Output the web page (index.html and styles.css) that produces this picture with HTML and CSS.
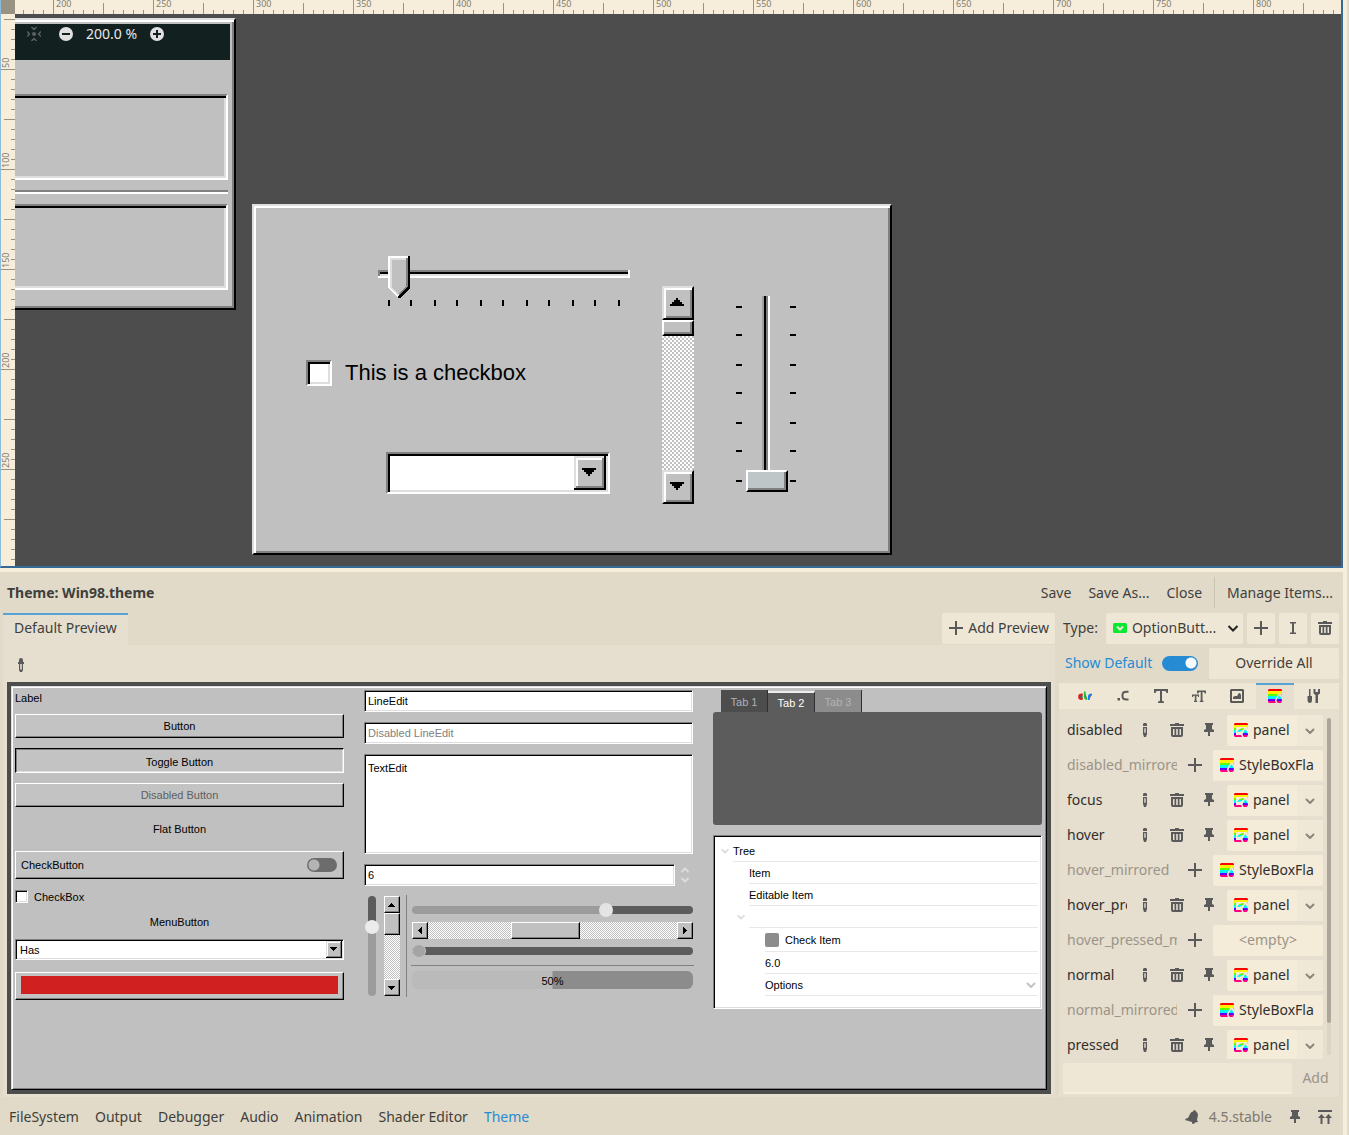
FILE: index.html
```html
<!DOCTYPE html>
<html lang="en">
<head>
<meta charset="utf-8">
<title>Theme Editor</title>
<link rel="stylesheet" href="styles.css">
</head>
<body>
<svg class="defs" aria-hidden="true">
  <defs>
    <linearGradient id="rainbow" x1="0" y1="0" x2="0" y2="14" gradientUnits="userSpaceOnUse">
      <stop offset=".17" stop-color="#ff0000"/><stop offset=".17" stop-color="#fff000"/>
      <stop offset=".34" stop-color="#fff000"/><stop offset=".34" stop-color="#5cff00"/>
      <stop offset=".48" stop-color="#5cff00"/><stop offset=".48" stop-color="#00ffe0"/>
      <stop offset=".68" stop-color="#00f0ff"/><stop offset=".68" stop-color="#5c00ff"/>
      <stop offset=".84" stop-color="#5c00ff"/><stop offset=".84" stop-color="#ff0080"/>
    </linearGradient>
  </defs>
  <symbol id="plus" viewBox="0 0 14 14"><path d="M6 0h2v6h6v2H8v6H6V8H0V6h6z"/></symbol>
  <symbol id="pencil" viewBox="0 0 14 14"><path d="M6 0h2l1 1v2H5V1zM5 4h4v7l-1 3H6l-1-3zm1.300 1.300v4.400h1.400V5.300z" fill-rule="evenodd"/></symbol>
  <symbol id="trash" viewBox="0 0 14 14"><path d="M4 1h1V0h4v1h5v2H0V1zM1 4h12v8q0 2-2 2H3q-2 0-2-2zm2 2v6h1.500V6zm3.200 0v6h1.600V6zm3.300 0v6H11V6z" fill-rule="evenodd"/></symbol>
  <symbol id="pin" viewBox="0 0 14 14"><path d="M3 0h8v2h-1v4l2 1v2H8v4H6V9H2V7l2-1V2H3z"/></symbol>
  <symbol id="chev" viewBox="0 0 14 14"><path d="M3.500 5.500 7 9l3.500-3.500" fill="none" stroke="currentColor" stroke-width="2" stroke-linecap="round" stroke-linejoin="round"/></symbol>
  <symbol id="boxflat" viewBox="0 0 14 14"><path fill="url(#rainbow)" fill-rule="evenodd" d="M1 0h12l1 1v6Q13 5 11.500 3.500 9 7 7 11q0 2 1 3H1l-1-1V1zM11.500 6Q14 9.500 14 11.300a2.500 2.700 0 0 1-5.400 0Q9 9.500 11.500 6z"/></symbol>
  <symbol id="boxtex" viewBox="0 0 14 14"><path fill="url(#rainbow)" fill-rule="evenodd" d="M1 0h12l1 1v5l-1.500-2H2v8h5l1 2H1l-1-1V1zM3 9q2-4 7-4Q9 9 3 9zM11.300 6Q14 9.500 14 11.300a2.500 2.700 0 0 1-5.400 0Q9 9.500 11.300 6z"/></symbol>
</svg>

<div class="app">
<main class="main">
  <section class="canvas" aria-label="Canvas">
    <div class="corner"></div>
    <div class="ruler-x"><span>200</span><span>250</span><span>300</span><span>350</span><span>400</span><span>450</span><span>500</span><span>550</span><span>600</span><span>650</span><span>700</span><span>750</span><span>800</span></div>
    <div class="ruler-y"><span>50</span><span>100</span><span>150</span><span>200</span><span>250</span></div>
    <div class="stage">
      <div class="win win-left">
        <div class="caption"></div>
        <div class="well"></div>
        <div class="groove"></div>
        <div class="well"></div>
      </div>
      <div class="zoombar">
        <svg class="ic" viewBox="0 0 14 14"><g fill="none" stroke="#5b6161" stroke-width="1.500"><path d="M4.500 0 7 2.500 9.500 0M4.500 14 7 11.500 9.500 14M0 4.500 2.500 7 0 9.500M14 4.500 11.500 7 14 9.500"/></g><circle cx="7" cy="7" r="2" fill="#5b6161"/></svg>
        <button aria-label="Zoom out"><svg class="ic" viewBox="0 0 14 14"><circle cx="7" cy="7" r="7" fill="#e0e0e0"/><path d="M3 6h8v2H3z" fill="#132020"/></svg></button>
        <span>200.0 %</span>
        <button aria-label="Zoom in"><svg class="ic" viewBox="0 0 14 14"><circle cx="7" cy="7" r="7" fill="#e0e0e0"/><path d="M6 3h2v3h3v2H8v3H6V8H3V6h3z" fill="#132020"/></svg></button>
      </div>
      <div class="win win-right">
        <div class="hslide">
          <input type="range" class="range98" value="4" min="0" max="100" aria-label="Horizontal slider">
          <svg class="ticks-h" viewBox="0 0 232 6"><path d="M0 0h2v6H0zM22 0h2v6h-2zM46 0h2v6h-2zM68 0h2v6h-2zM92 0h2v6h-2zM114 0h2v6h-2zM138 0h2v6h-2zM160 0h2v6h-2zM184 0h2v6h-2zM206 0h2v6h-2zM230 0h2v6h-2z"/></svg>
        </div>
        <label class="check98"><input type="checkbox"><span>This is a checkbox</span></label>
        <select class="select98" aria-label="Option"><option></option></select>
        <div class="scroll98">
          <button aria-label="Scroll up"><svg viewBox="0 0 7 4"><path d="M3 0h1v1h1v1h1v1h1v1H0V3h1V2h1V1h1z"/></svg></button>
          <div class="thumb"></div>
          <button class="end" aria-label="Scroll down"><svg viewBox="0 0 7 4"><path d="M0 0h7v1H6v1H5v1H4v1H3V3H2V2H1V1H0z"/></svg></button>
        </div>
        <div class="vslide">
          <svg viewBox="0 0 6 176"><path d="M0 0h6v2H0zM0 28h6v2H0zM0 58h6v2H0zM0 86h6v2H0zM0 116h6v2H0zM0 144h6v2H0zM0 174h6v2H0z"/></svg>
          <input type="range" class="vrange98" value="0" aria-label="Vertical slider">
          <svg viewBox="0 0 6 176"><path d="M0 0h6v2H0zM0 28h6v2H0zM0 58h6v2H0zM0 86h6v2H0zM0 116h6v2H0zM0 144h6v2H0zM0 174h6v2H0z"/></svg>
        </div>
      </div>
    </div>
  </section>

  <section class="dock">
    <header class="titlebar">
      <h1>Theme: Win98.theme</h1>
      <button>Save</button><button>Save As...</button><button>Close</button>
      <i class="vsep"></i>
      <button>Manage Items...</button>
    </header>
    <div class="columns">
      <div class="left">
        <div class="tabrow"><button class="tab">Default Preview</button><button class="btn add"><svg class="ic"><use href="#plus"/></svg>Add Preview</button></div>
        <div class="pane">
          <button class="pick" aria-label="Pick control"><svg class="ic" viewBox="0 0 14 14"><path d="M7 0q2 0 2 2v2h1v2H9v6l-1 2H6l-1-2V6H4V4h1V2q0-2 2-2zM6.200 6v5.500h1.600V6z" fill-rule="evenodd"/></svg></button>
          <div class="frame"><div class="preview">
            <div class="col">
              <div class="plain">Label</div>
              <button class="b98">Button</button>
              <button class="b98 down">Toggle Button</button>
              <button class="b98" disabled>Disabled Button</button>
              <button class="flat98">Flat Button</button>
              <label class="b98 tall switchrow"><span>CheckButton</span><input type="checkbox" class="switch"></label>
              <label class="smallcheck"><input type="checkbox">CheckBox</label>
              <button class="menu98">MenuButton</button>
              <select class="smallselect" aria-label="Options"><option>Has</option></select>
              <button class="b98 tall color" aria-label="Colour"><span></span></button>
            </div>
            <div class="col">
              <input class="edit" value="LineEdit" aria-label="LineEdit">
              <input class="edit" value="Disabled LineEdit" disabled aria-label="Disabled LineEdit">
              <textarea class="edit area" aria-label="TextEdit">TextEdit</textarea>
              <div class="spin"><input class="edit" value="6" aria-label="Number"><svg viewBox="0 0 10 16"><path d="m1.500 5 3.500-3.500L8.500 5m-7 6L5 14.500 8.500 11" fill="none" stroke="#dcdcdc" stroke-width="2"/></svg></div>
              <div class="sliders">
                <input type="range" class="vrange" value="72" aria-label="Vertical value">
                <div class="sb sb-v"><button aria-label="Up"><svg viewBox="0 0 7 4"><path d="M3 0h1v1h1v1h1v1h1v1H0V3h1V2h1V1h1z"/></svg></button><div class="thumb"></div><button class="end" aria-label="Down"><svg viewBox="0 0 7 4"><path d="M0 0h7v1H6v1H5v1H4v1H3V3H2V2H1V1H0z"/></svg></button></div>
                <i class="line-v"></i>
                <div class="stack">
                  <input type="range" class="range" value="70" aria-label="Horizontal value">
                  <div class="sb sb-h"><button aria-label="Left"><svg viewBox="0 0 4 7"><path d="M3 0h1v7H3V6H2V5H1V4H0V3h1V2h1V1h1z"/></svg></button><div class="thumb"></div><button class="end" aria-label="Right"><svg viewBox="0 0 4 7"><path d="M0 0h1v1h1v1h1v1h1v1H3v1H2v1H1v1H0z"/></svg></button></div>
                  <input type="range" class="range idle" value="0" disabled aria-label="Disabled value">
                  <i class="line-h"></i>
                  <div class="bar"><span>50%</span></div>
                </div>
              </div>
            </div>
            <div class="col">
              <div class="tabs98">
                <div class="heads"><button>Tab 1</button><button class="on">Tab 2</button><button class="off" disabled>Tab 3</button></div>
                <div class="body"></div>
              </div>
              <ul class="tree">
                <li><svg class="ic"><use href="#chev"/></svg><span>Tree</span></li>
                <li class="l1"><span>Item</span></li>
                <li class="l1"><span>Editable Item</span></li>
                <li class="l1 open"><svg class="ic"><use href="#chev"/></svg><span></span></li>
                <li class="l2 chk"><span><i></i>Check Item</span></li>
                <li class="l2"><span>6.0</span></li>
                <li class="l2"><span>Options<svg class="ic"><use href="#chev"/></svg></span></li>
              </ul>
            </div>
          </div></div>
        </div>
      </div>

      <div class="right">
        <div class="typerow">
          <label for="type">Type:</label>
          <div class="btn typebox"><svg class="ic" viewBox="0 0 14 14"><rect y="2" width="14" height="10" rx="1.500" fill="#0be832"/><path d="m4 5.500 3 3 3-3" fill="none" stroke="#efe7d6" stroke-width="2"/></svg><select id="type"><option>OptionButt...</option></select><svg class="ic dark" viewBox="0 0 14 14"><path d="m2.500 5 4.500 4.500L11.500 5" fill="none" stroke="currentColor" stroke-width="2"/></svg></div>
          <button class="btn sq" aria-label="Add type"><svg class="ic"><use href="#plus"/></svg></button>
          <button class="btn sq" aria-label="Rename type"><svg class="ic" viewBox="0 0 14 14"><path d="M4 1h6v1.500H8v9h2V13H4v-1.500h2v-9H4z"/></svg></button>
          <button class="btn sq" aria-label="Remove type"><svg class="ic"><use href="#trash"/></svg></button>
        </div>
        <div class="defrow">
          <label class="show">Show Default<input type="checkbox" class="toggle" checked></label>
          <button class="btn override">Override All</button>
        </div>
        <nav class="icontabs">
          <button aria-label="Colors"><svg class="ic" viewBox="0 0 14 14" fill="none" stroke-width="1.700"><path d="M4.600 5.300H3.500Q1 5.300 1 7.700t2.500 2.400h1.100" stroke="#f01818"/><path d="M6.700 2.500v5.300q0 2.300 2.600 2.300" stroke="#20c830"/><path d="M10.800 11V7.700q0-2.400 3.200-2.400" stroke="#1080ff"/></svg></button>
          <button aria-label="Constants"><svg class="ic" viewBox="0 0 14 14"><path d="M1.500 9h2.500v2.500H1.500z"/><path d="M12.500 2.700h-2.200q-3.800 0-3.800 3.300v1.300q0 3.200 3.800 3.200h2.200" fill="none" stroke="currentColor" stroke-width="2"/></svg></button>
          <button aria-label="Fonts"><svg class="ic" viewBox="0 0 14 14"><path d="M0 0h14v4h-1.500q0-2-2-2H8v9q0 1.500 2 1.500V14H4v-1.500q2 0 2-1.500V2H3.500q-2 0-2 2H0z"/></svg></button>
          <button aria-label="Font sizes"><svg class="ic" viewBox="0 0 14 14"><path d="M5 1.500h9v3h-1.200q0-1.500-1.500-1.500h-.8v8q0 1 1 1v1H7.700v-1q1 0 1-1V3H8q-1.700 0-1.700 1.500H5zM0 5.500h7v2.500H6q0-1.200-1-1.200h-.6V11q0 1 .8 1v1H2v-1q.8 0 .8-1V6.800H2Q1 6.800 1 8H0z"/></svg></button>
          <button aria-label="Icons"><svg class="ic" viewBox="0 0 14 14"><path d="M1 0h12l1 1v12l-1 1H1l-1-1V1zm1 2v10h10V2zm1 8V8l2-1h2l2-3h1l1 2v4z" fill-rule="evenodd"/></svg></button>
          <button class="on" aria-label="Styles"><svg class="ic"><use href="#boxflat"/></svg></button>
          <button aria-label="Type settings"><svg class="ic" viewBox="0 0 14 14"><path d="M3 0h1.500v7H6v4q0 3-2.200 3T1.500 11V7H3zM7.500 0v4.500l2 1.500v8H12V6l2-1.500V0h-2v3h-2.500V0z"/></svg></button>
        </nav>
        <div class="listwrap">
          <div class="list">
            <div class="row"><b>disabled</b><button><svg class="ic"><use href="#pencil"/></svg></button><button><svg class="ic"><use href="#trash"/></svg></button><button><svg class="ic"><use href="#pin"/></svg></button><div class="res"><button><svg class="ic"><use href="#boxtex"/></svg>panel</button><button class="dd"><svg class="ic"><use href="#chev"/></svg></button></div></div>
            <div class="row dim"><b>disabled_mirrored</b><button><svg class="ic"><use href="#plus"/></svg></button><button class="res wide"><svg class="ic"><use href="#boxflat"/></svg>StyleBoxFla</button></div>
            <div class="row"><b>focus</b><button><svg class="ic"><use href="#pencil"/></svg></button><button><svg class="ic"><use href="#trash"/></svg></button><button><svg class="ic"><use href="#pin"/></svg></button><div class="res"><button><svg class="ic"><use href="#boxtex"/></svg>panel</button><button class="dd"><svg class="ic"><use href="#chev"/></svg></button></div></div>
            <div class="row"><b>hover</b><button><svg class="ic"><use href="#pencil"/></svg></button><button><svg class="ic"><use href="#trash"/></svg></button><button><svg class="ic"><use href="#pin"/></svg></button><div class="res"><button><svg class="ic"><use href="#boxtex"/></svg>panel</button><button class="dd"><svg class="ic"><use href="#chev"/></svg></button></div></div>
            <div class="row dim"><b>hover_mirrored</b><button><svg class="ic"><use href="#plus"/></svg></button><button class="res wide"><svg class="ic"><use href="#boxflat"/></svg>StyleBoxFla</button></div>
            <div class="row"><b>hover_pressed</b><button><svg class="ic"><use href="#pencil"/></svg></button><button><svg class="ic"><use href="#trash"/></svg></button><button><svg class="ic"><use href="#pin"/></svg></button><div class="res"><button><svg class="ic"><use href="#boxtex"/></svg>panel</button><button class="dd"><svg class="ic"><use href="#chev"/></svg></button></div></div>
            <div class="row dim"><b>hover_pressed_mirrored</b><button><svg class="ic"><use href="#plus"/></svg></button><button class="res wide empty" disabled>&lt;empty&gt;</button></div>
            <div class="row"><b>normal</b><button><svg class="ic"><use href="#pencil"/></svg></button><button><svg class="ic"><use href="#trash"/></svg></button><button><svg class="ic"><use href="#pin"/></svg></button><div class="res"><button><svg class="ic"><use href="#boxtex"/></svg>panel</button><button class="dd"><svg class="ic"><use href="#chev"/></svg></button></div></div>
            <div class="row dim"><b>normal_mirrored</b><button><svg class="ic"><use href="#plus"/></svg></button><button class="res wide"><svg class="ic"><use href="#boxflat"/></svg>StyleBoxFla</button></div>
            <div class="row"><b>pressed</b><button><svg class="ic"><use href="#pencil"/></svg></button><button><svg class="ic"><use href="#trash"/></svg></button><button><svg class="ic"><use href="#pin"/></svg></button><div class="res"><button><svg class="ic"><use href="#boxtex"/></svg>panel</button><button class="dd"><svg class="ic"><use href="#chev"/></svg></button></div></div>
          </div>
          <div class="listbar"><div></div></div>
        </div>
        <div class="addrow"><input aria-label="Item name"><button disabled>Add</button></div>
      </div>
    </div>
    <footer class="bottombar">
      <button>FileSystem</button><button>Output</button><button>Debugger</button><button>Audio</button><button>Animation</button><button>Shader Editor</button><button class="on">Theme</button>
      <span class="fill"></span>
      <svg class="ic" viewBox="0 0 14 14"><path d="M9 0q2 0 2 1.500 2 1 2 3.500l-1 5 1 2-3 .5-1 1.500-2-.5V12L0 10l1-1.500 2-.5 2-4q1-2.500 3-2.500z"/></svg>
      <span class="version">4.5.stable</span>
      <button aria-label="Pin"><svg class="ic"><use href="#pin"/></svg></button>
      <button aria-label="Expand"><svg class="ic" viewBox="0 0 14 14"><path d="M0 0h14v2H0zM3.500 4 7 8H4.500v6h-2V8H0zM10.500 4 14 8h-2.500v6h-2V8H7z"/></svg></button>
    </footer>
  </section>
</main>
<aside class="edge"></aside>
</div>
</body>
</html>
```

FILE: styles.css
```css
* { box-sizing: border-box; }
body { margin: 0; font: 14px/20px "Noto Sans", "Open Sans", sans-serif; color: #403f3b; background: #e1dac9; }
button, input, select, textarea { font: inherit; color: inherit; margin: 0; padding: 0; border: 0; background: none; border-radius: 0; outline: 0; }
button { white-space: nowrap; }
select, input[type=checkbox], input[type=range] { appearance: none; -webkit-appearance: none; }
.defs { position: absolute; width: 0; height: 0; }
.ic { width: 14px; height: 14px; fill: #5a5a5a; color: #5a5a5a; flex: none; display: block; }
.dark { color: #222; }

.app { display: flex; min-height: 100vh; background: #f6eddb; }
.main { flex: 1; min-width: 0; display: flex; flex-direction: column; gap: 4px; }
.edge { width: 2px; margin-left: 4px; background: #e1dac9; }

/* canvas with rulers */
.canvas { flex: 1; min-height: 568px; display: grid; grid-template: 14px 1fr / 14px 1fr; border: solid; border-color: #8abbd8 #356a97 #356a97 #8abbd8; border-width: 0 2px 2px 1px; overflow: hidden; background: #f6eddb; }
.corner { background: #989282; }
.ruler-x { display: flex; min-width: 0; padding-left: 38px; font-size: 9px; line-height: 8px; color: #837e72;
  background: repeating-linear-gradient(90deg, #989282 0 1px, transparent 1px 100px) 38px 0 / 100% 14px no-repeat,
    repeating-linear-gradient(90deg, #989282 0 1px, transparent 1px 50px) -12px 3px / 110% 11px no-repeat,
    repeating-linear-gradient(90deg, #989282 0 1px, transparent 1px 10px) 8px 10px / 100% 4px no-repeat; }
.ruler-x span { flex: 0 0 100px; padding-left: 3px; }
.ruler-x span:last-child { flex-basis: auto; }
.ruler-y { display: flex; flex-direction: column; font-size: 9px; line-height: 9px; color: #837e72; min-height: 0;
  background: repeating-linear-gradient(180deg, #989282 0 1px, transparent 1px 100px) 0 55px / 14px 100% no-repeat,
    repeating-linear-gradient(180deg, #989282 0 1px, transparent 1px 50px) 3px 5px / 11px 100% no-repeat,
    repeating-linear-gradient(180deg, #989282 0 1px, transparent 1px 10px) 10px 5px / 4px 100% no-repeat; }
.ruler-y span { flex: 0 0 100px; width: 8px; writing-mode: vertical-rl; transform: rotate(180deg); padding-top: 1px; }
.ruler-y span:first-child { flex-basis: 55px; }
.stage { position: relative; background: #4d4d4d; min-width: 0; }

/* raised windows lying on the free canvas */
.win { position: absolute; background: #c0c0c0; border: 2px solid; border-color: #dedede #000 #000 #dedede; box-shadow: inset 2px 2px #fff, inset -2px -2px #808080; }
.win-left { left: 0; top: 4px; width: 221px; height: 292px; border-left: 0; box-shadow: inset 0 2px #fff, inset -2px -2px #808080; padding: 4px 4px 0 0; }
.caption { height: 36px; background: #132020; margin-bottom: 34px; }
.well { height: 86px; margin-right: 2px; border: 2px solid; border-left: 0; border-color: #808080 #fff #fff; box-shadow: inset 0 2px #000, inset -2px -2px #dedede; }
.groove { height: 4px; margin: 10px 2px 10px 0; background: #fff; border-top: 2px solid #808080; }
.zoombar { position: absolute; left: 12px; top: 10px; display: flex; align-items: center; gap: 13px; color: #e8e8e8; }
.zoombar .ic { margin-right: 5px; }
.zoombar button .ic { margin: 0; }

.win-right { left: 237px; top: 190px; width: 640px; height: 351px; font: 22px/26px "Liberation Sans", Arial, sans-serif; color: #000; }
.hslide, .check98, .select98, .scroll98, .vslide { position: absolute; }
.hslide { left: 124px; top: 50px; width: 252px; }
.range98 { display: block; width: 252px; height: 42px; background: linear-gradient(#808080, #808080) 0 14px / 2px 6px no-repeat, linear-gradient(#fff, #fff) 250px 14px / 2px 8px no-repeat, linear-gradient(#808080 2px, #000 2px 4px, #dedede 4px 6px, #fff 6px) 0 14px / 100% 8px no-repeat; }
.range98::-webkit-slider-thumb { -webkit-appearance: none; width: 22px; height: 42px; border: 0; margin-left: 1px; background: url("data:image/svg+xml,%3Csvg xmlns='http://www.w3.org/2000/svg' viewBox='0 0 11 21' shape-rendering='crispEdges'%3E%3Cpath fill='%23c0c0c0' d='M0 0h11v16L5.500 21 0 16z'/%3E%3Cpath fill='%23808080' d='M9 1h1v15L6 20H5v-1l4-4z'/%3E%3Cpath fill='%23dedede' d='M1 1h8v1H2v14l4 4H5l-4-4z'/%3E%3Cpath fill='%23fff' d='M0 0h10v1H1v15l4 4v1L0 16z'/%3E%3Cpath d='M10 0h1v16l-5 5H5v-1l5-5z'/%3E%3C/svg%3E") 0 0 / 100% 100%; }
.ticks-h { display: block; width: 232px; height: 6px; margin: 2px 0 0 10px; }
.check98 { left: 52px; top: 154px; display: flex; align-items: center; gap: 13px; }
.check98 input { width: 26px; height: 26px; background: #fff; border: 2px solid; border-color: #808080 #fff #fff #808080; box-shadow: inset 2px 2px #000, inset -2px -2px #dedede; }
.select98, .smallselect { background: #fff; border: solid; border-color: #808080 #fff #fff #808080; background-origin: border-box; background-repeat: no-repeat;
  background-image: url("data:image/svg+xml,%3Csvg xmlns='http://www.w3.org/2000/svg' viewBox='0 0 16 17' shape-rendering='crispEdges'%3E%3Cpath d='M0 0h16v17H0z'/%3E%3Cpath fill='%23dedede' d='M0 0h15v16H0z'/%3E%3Cpath fill='%23808080' d='M1 1h14v15H1z'/%3E%3Cpath fill='%23fff' d='M1 1h13v14H1z'/%3E%3Cpath fill='%23c0c0c0' d='M2 2h12v13H2z'/%3E%3Cpath d='M4 6h7v1h-1v1H9v1H8v1H7V9H6V8H5V7H4z'/%3E%3C/svg%3E"); }
.select98 { left: 132px; top: 246px; width: 224px; height: 42px; border-width: 2px; background-size: 32px 34px; background-position: right 4px top 4px; box-shadow: inset 2px 2px #000, inset -2px -2px #dedede; }
.scroll98 { left: 408px; top: 80px; width: 32px; height: 218px; display: flex; flex-direction: column; background: repeating-conic-gradient(#fff 0 25%, #c0c0c0 0 50%) 0 0 / 4px 4px; }
.scroll98 button { height: 34px; display: grid; place-items: center; padding: 0 2px 2px 0; background: #c0c0c0; border: 2px solid; border-color: #dedede #000 #000 #dedede; box-shadow: inset 2px 2px #fff, inset -2px -2px #808080; }
.scroll98 button svg { width: 14px; height: 8px; }
.scroll98 .thumb { height: 16px; background: #c0c0c0; border: 2px solid; border-color: #fff #000 #000 #fff; box-shadow: inset -2px -2px #808080; }
.end { margin-top: auto; }
.vslide { left: 482px; top: 90px; display: flex; gap: 4px; align-items: flex-start; }
.vslide svg { width: 6px; height: 176px; margin-top: 10px; }
.vrange98 { writing-mode: vertical-lr; direction: rtl; width: 42px; height: 196px; margin-right: -2px; background: linear-gradient(90deg, #a0a0a0 2px, #000 2px 4px, #808080 4px 6px, #fff 6px) 16px 0 / 8px 100% no-repeat; }
.vrange98::-webkit-slider-thumb { -webkit-appearance: none; width: 42px; height: 22px; border: 2px solid; border-color: #fff #000 #000 #fff; background: #bec6c8; box-shadow: inset -2px -2px #808080; }

/* dock */
.dock { background: #e1dac9; padding: 4px 4px 0 3px; }
.titlebar { display: flex; align-items: center; height: 33px; gap: 17px; padding: 0 6px 0 4px; }
.titlebar h1 { font-size: 14px; line-height: 20px; margin: 0 auto 0 0; }
.vsep { width: 1px; height: 31px; background: #cbc4b3; margin: 0 -5px; }
.columns { display: flex; gap: 4px; margin-top: 4px; }
.left { flex: 1; min-width: 0; display: flex; flex-direction: column; }
.tabrow { display: flex; justify-content: space-between; align-items: flex-start; }
.tab { height: 32px; padding: 0 11px 4px; border-top: 2px solid #57a3d6; background: #e6decf; }
.btn { height: 31px; padding-bottom: 1px; background: #efe7d6; border-radius: 2px; display: flex; align-items: center; justify-content: center; }
.add { gap: 5px; padding: 0 6px 2px 7px; }
.pane { flex: 1; background: #e6decf; padding: 0 4px 3px; display: flex; flex-direction: column; }
.pick { width: 28px; height: 37px; display: grid; place-items: center; padding-top: 2px; }
.frame { flex: 1; display: flex; border: 4px solid #4d4d4d; }

/* Windows 98 style preview */
.preview { flex: 1; min-width: 0; display: grid; grid-template-columns: repeat(3, minmax(0, 1fr)); gap: 20px; padding: 3px 4px 3px 3px; background: #c0c0c0; border: 1px solid; border-color: #dedede #000 #000 #dedede; box-shadow: inset 1px 1px #fff, inset -1px -1px #808080; font: 11px/14px "Liberation Sans", Arial, sans-serif; color: #000; }
.col { display: flex; flex-direction: column; gap: 10px; min-width: 0; }
.plain { height: 14px; padding-top: 1px; }
.b98 { height: 24px; background: #c3c3c3; border: 1px solid; border-color: #fff #000 #000 #fff; box-shadow: inset -1px -1px #808080; }
.b98.down { height: 25px; padding-top: 3px; border-color: #000 #fff #fff #000; box-shadow: inset 1px 1px #808080, inset -1px -1px #dedede; }
.b98:disabled { color: #606060; }
.b98.tall { height: 28px; }
.flat98 { height: 24px; }
.switchrow { display: flex; align-items: center; justify-content: space-between; padding: 0 6px 0 5px; }
.switch { width: 30px; height: 14px; border-radius: 7px; background: radial-gradient(circle at 7px 7px, #b4b4b4 5px, #6c6c6c 6px); }
.smallcheck { height: 15px; display: flex; align-items: center; gap: 6px; }
.smallcheck input { width: 13px; height: 13px; background: #fff; border: 1px solid; border-color: #808080 #fff #fff #808080; box-shadow: inset 1px 1px #000, inset -1px -1px #dedede; }
.menu98 { height: 15px; }
.smallselect { height: 21px; padding-left: 4px; border-width: 1px; background-size: 16px 17px; background-position: right 2px top 2px; box-shadow: inset 1px 1px #000, inset -1px -1px #dedede; margin-bottom: 2px; }
.color { padding: 3px 5px 5px; display: flex; }
.color span { flex: 1; background: #d02020; }
.edit { display: block; width: 100%; height: 22px; padding: 0 3px; background: #fff; border: 1px solid; border-color: #808080 #fff #fff #808080; box-shadow: inset 1px 1px #000, inset -1px -1px #dedede; }
.edit:disabled { color: #808080; }
.area { height: 100px; padding-top: 6px; resize: none; }
.spin { display: flex; gap: 5px; padding-right: 3px; align-items: center; }
.spin .edit { flex: 1; min-width: 0; }
.spin svg { width: 10px; height: 16px; flex: none; }
.sliders { display: flex; height: 100px; }
.vrange { writing-mode: vertical-lr; direction: rtl; width: 8px; height: 100px; margin: 0 8px 0 4px; border-radius: 4px; background: linear-gradient(#5c5c5c 30%, #9c9c9c 30%); }
.vrange::-webkit-slider-thumb { -webkit-appearance: none; width: 14px; height: 14px; border: 0; border-radius: 50%; margin-left: -3px; margin-right: -3px; background: #ececec; }
.sb { display: flex; background: repeating-conic-gradient(#fff 0 25%, #c0c0c0 0 50%) 0 0 / 2px 2px; }
.sb button, .sb .thumb { background: #c0c0c0; border: 1px solid; border-color: #fff #000 #000 #fff; box-shadow: inset -1px -1px #808080; }
.sb button { width: 16px; height: 17px; display: grid; place-items: center; padding-right: 1px; flex: none; }
.sb-v { width: 16px; flex-direction: column; }
.sb-v svg { width: 7px; height: 4px; }
.sb-v .thumb { height: 22px; }
.sb-h .end { margin: 0 0 0 auto; }
.sb-h svg { width: 4px; height: 7px; }
.sb-h .thumb { width: 69px; margin-left: 83px; }
.line-v { width: 1px; background: #808080; margin: -1px 5px -1px 6px; }
.stack { flex: 1; min-width: 0; display: flex; flex-direction: column; gap: 5px; padding-top: 7px; }
.range { height: 8px; width: 100%; margin: 3px 0; border-radius: 4px; background: linear-gradient(90deg, #9c9c9c 69%, #5c5c5c 69%); }
.range::-webkit-slider-thumb { -webkit-appearance: none; width: 14px; height: 14px; margin: -3px 0; border: 0; border-radius: 50%; background: #e4e4e4; }
.range::-webkit-slider-runnable-track { height: 8px; }
.idle { background: #5c5c5c; }
.idle::-webkit-slider-thumb { background: #a4a4a4; border: 1px solid #c4c4c4; }
.line-h { height: 1px; margin: 2px -1px 0; background: #808080; }
.bar { height: 18px; padding-top: 2px; border-radius: 6px; display: grid; place-items: center; background: linear-gradient(#bababa, #bababa) 0 0 / 50% 100% no-repeat #8c8c8c; }
.heads { display: flex; height: 22px; padding-left: 8px; align-items: flex-end; }
.heads button { width: 47px; height: 22px; border: 1px solid #303030; border-width: 0 1px 0 0; background: #4d4d4d; color: #b2b2b2; padding-top: 2px; }
.heads .on { height: 21px; border-top: 2px solid #eee; background: #5c5c5c; color: #fff; padding: 0; }
.heads .off { background: #8c8c8c; color: #b4b4b4; }
.body { height: 113px; border-radius: 3px; background: #5c5c5c; }
.tree { list-style: none; margin: 0; height: 174px; padding: 4px 3px 4px 5px; background: #fff; border: 1px solid; border-color: #808080 #fff #fff #808080; box-shadow: inset 1px 1px #000, inset -1px -1px #dedede; }
.tree li { display: flex; height: 22px; align-items: center; padding-left: 14px; }
.tree li > .ic { margin: 0 1px 0 -15px; padding: 1px; color: #dcdcdc; }
.tree span { flex: 1; align-self: stretch; display: flex; align-items: center; border-bottom: 1px solid #e8e8e8; }
.tree .l1 { padding-left: 30px; }
.tree .l2 { padding-left: 46px; }
.tree .chk { height: 24px; }
.tree i { width: 14px; height: 14px; border-radius: 2px; background: #8c8c8c; margin-right: 6px; }
.tree span .ic { margin-left: auto; color: #c4c4c4; }

/* type editor */
.right { width: 280px; flex: none; display: flex; flex-direction: column; }
.typerow { display: flex; align-items: center; gap: 4px; padding-left: 4px; }
.typerow label { margin-right: 4px; padding-bottom: 2px; }
.typebox { flex: 1; min-width: 0; padding: 0 3px 1px 7px; gap: 5px; }
.typebox select { flex: 1; min-width: 0; }
.sq { width: 28px; }
.defrow { display: flex; align-items: center; justify-content: space-between; padding-left: 6px; margin-top: 4px; }
.show { display: flex; align-items: center; gap: 10px; color: #268bd2; padding-bottom: 1px; }
.toggle { width: 36px; height: 15px; border-radius: 8px; background: radial-gradient(circle at 29px 7px, #f8fbfd 5px, #268bd2 6px); }
.override { width: 130px; padding-bottom: 2px; }
.icontabs { display: flex; height: 26px; margin-top: 4px; padding: 0 7px; background: #efe7d6; }
.icontabs button { flex: 1; display: grid; place-items: center; }
.icontabs .on { background: #e6decf; border-top: 2px solid #57a3d6; padding-bottom: 2px; }
.listwrap { display: flex; height: 350px; padding: 6px 8px 0; background: #e6decf; overflow: hidden; }
.list { flex: 1; min-width: 0; overflow: hidden; display: flex; flex-direction: column; gap: 4px; }
.row { display: flex; height: 31px; flex: none; align-items: center; gap: 4px; color: #302f2c; }
.row b { flex: 1; min-width: 0; padding-bottom: 2px; font-weight: 400; overflow: hidden; white-space: nowrap; }
.row > button:not(.res) { width: 28px; height: 31px; padding-bottom: 2px; display: grid; place-items: center; }
.row.dim b { color: #9b9588; }
.res { width: 96px; height: 31px; display: flex; flex: none; background: #f4ebd9; border-radius: 2px; overflow: hidden; }
.res button { flex: 1; display: flex; align-items: center; gap: 5px; padding: 0 0 2px 7px; }
.res .dd { flex: 0 0 26px; padding: 0 6px; background: #f0e8d6; }
.res .dd .ic { color: #8c877c; }
.wide { width: 110px; align-items: center; gap: 5px; padding: 0 0 2px 7px; }
.empty { justify-content: center; padding: 0 0 2px; color: #9b9588; }
.listbar { width: 4px; margin: 3px 0 4px 4px; border-radius: 2px; background: #dcd5c5; }
.listbar div { height: 305px; border-radius: 2px; background: #aba697; }
.addrow { display: flex; background: #e6decf; padding: 4px 0 3px 4px; }
.addrow input { flex: 1; min-width: 0; height: 31px; background: #efe7d6; border-bottom: 2px solid #f6eddb; border-radius: 2px; }
.addrow button { width: 47px; padding-bottom: 2px; color: #9b9588; }
.bottombar { display: flex; align-items: center; gap: 16px; height: 38px; padding: 2px 7px 0 6px; }
.bottombar .on { color: #268bd2; }
.fill { flex: 1; }
.version { color: #7d796f; margin: 0 0 0 -6px; }
```
